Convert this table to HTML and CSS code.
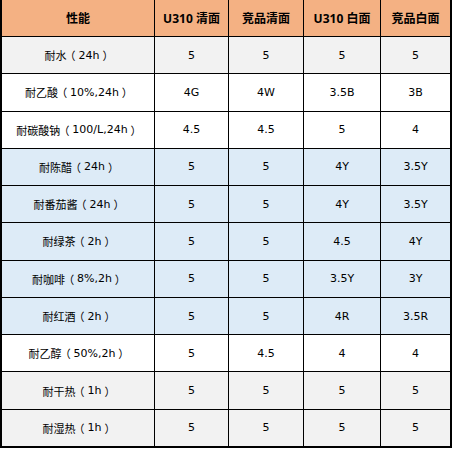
FILE: index.html
```html
<!DOCTYPE html>
<html lang="zh-CN">
<head>
<meta charset="utf-8">
<link rel="stylesheet" href="styles.css">
</head>
<body>
<div class="sheet">
  <div class="cell head">性能</div><div class="cell head">U310 清面</div><div class="cell head">竞品清面</div><div class="cell head">U310 白面</div><div class="cell head">竞品白面</div>

  <div class="cell gray">耐水<span class="par">（</span>24h<span class="par">）</span></div><div class="cell gray">5</div><div class="cell gray">5</div><div class="cell gray">5</div><div class="cell gray">5</div>
  <div class="cell white">耐乙酸<span class="par">（</span>10%,24h<span class="par">）</span></div><div class="cell white">4G</div><div class="cell white">4W</div><div class="cell white">3.5B</div><div class="cell white">3B</div>
  <div class="cell white">耐碳酸钠<span class="par">（</span>100/L,24h<span class="par">）</span></div><div class="cell white">4.5</div><div class="cell white">4.5</div><div class="cell white">5</div><div class="cell white">4</div>

  <div class="cell blue">耐陈醋<span class="par">（</span>24h<span class="par">）</span></div><div class="cell blue">5</div><div class="cell blue">5</div><div class="cell blue">4Y</div><div class="cell blue">3.5Y</div>
  <div class="cell blue">耐番茄酱<span class="par">（</span>24h<span class="par">）</span></div><div class="cell blue">5</div><div class="cell blue">5</div><div class="cell blue">4Y</div><div class="cell blue">3.5Y</div>
  <div class="cell blue">耐绿茶<span class="par">（</span>2h<span class="par">）</span></div><div class="cell blue">5</div><div class="cell blue">5</div><div class="cell blue">4.5</div><div class="cell blue">4Y</div>
  <div class="cell blue">耐咖啡<span class="par">（</span>8%,2h<span class="par">）</span></div><div class="cell blue">5</div><div class="cell blue">5</div><div class="cell blue">3.5Y</div><div class="cell blue">3Y</div>
  <div class="cell blue">耐红酒<span class="par">（</span>2h<span class="par">）</span></div><div class="cell blue">5</div><div class="cell blue">5</div><div class="cell blue">4R</div><div class="cell blue">3.5R</div>

  <div class="cell white">耐乙醇<span class="par">（</span>50%,2h<span class="par">）</span></div><div class="cell white">5</div><div class="cell white">4.5</div><div class="cell white">4</div><div class="cell white">4</div>
  <div class="cell gray">耐干热<span class="par">（</span>1h<span class="par">）</span></div><div class="cell gray">5</div><div class="cell gray">5</div><div class="cell gray">5</div><div class="cell gray">5</div>
  <div class="cell gray">耐湿热<span class="par">（</span>1h<span class="par">）</span></div><div class="cell gray">5</div><div class="cell gray">5</div><div class="cell gray">5</div><div class="cell gray">5</div>
</div>
</body>
</html>
```

FILE: styles.css
```css
html, body {
  margin: 0;
  padding: 0;
  background: #ffffff;
}

.sheet {
  display: grid;
  grid-template-columns: 152px 73px 74px 76px 69px;
  grid-template-rows: 36px repeat(11, 1fr);
  gap: 1px;
  width: 448px;
  height: 446px;
  padding: 0 2px 2px 2px;
  background: #000000;
  font-family: "DejaVu Sans", "Noto Sans CJK SC", sans-serif;
  font-size: 11px;
  color: #000000;
}

.cell {
  display: flex;
  align-items: center;
  justify-content: center;
  white-space: nowrap;
}

.par {
  font-family: "Noto Sans CJK SC", sans-serif;
  font-feature-settings: "palt";
  margin: 0 0.3em;
}

.head {
  background: #f4b183;
  font-family: "Noto Sans", "Noto Sans CJK SC", sans-serif;
  font-weight: bold;
  font-size: 12px;
}

.gray {
  background: #f2f2f2;
}

.white {
  background: #ffffff;
}

.blue {
  background: #ddebf7;
}
```
